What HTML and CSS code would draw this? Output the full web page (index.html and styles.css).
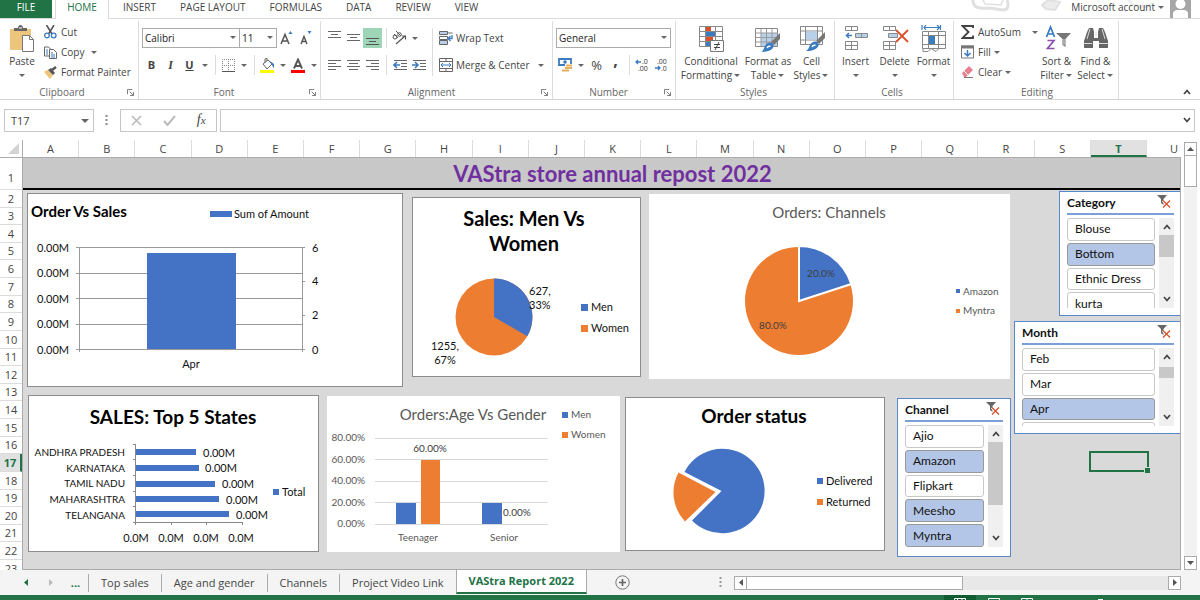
FILE: index.html
```html
<!DOCTYPE html>
<html lang="en">
<head>
<meta charset="utf-8">
<title>VAStra Report 2022</title>
<link rel="stylesheet" href="styles.css">
</head>
<body>
<svg class="defs" aria-hidden="true">
  <defs>
    <symbol id="launch" viewBox="0 0 8 8"><path d="M.5 6V.5H6M3 3l4 4M7.500 3.500v4h-4" fill="none" stroke="#666"/></symbol>
    <symbol id="clear-filter" viewBox="0 0 14 14"><path d="M0 0h10L6.500 4v6L4 8V4z" fill="#666"/><path d="M6 5.500l7 7M13 5.500l-7 7" stroke="#fff" stroke-width="3"/><path d="M6 5.500l7 7M13 5.500l-7 7" stroke="#d9512c" stroke-width="1.300"/></symbol>
    <symbol id="up" viewBox="0 0 8 6"><path d="M1 5l3-3.500L7 5" fill="none" stroke="#444" stroke-width="1.700"/></symbol>
    <symbol id="down" viewBox="0 0 8 6"><path d="M1 1l3 3.500L7 1" fill="none" stroke="#444" stroke-width="1.700"/></symbol>
    <symbol id="brush" viewBox="0 0 20 20"><path d="M19 0v6l-6 6-3-3z" fill="#777"/><path d="M9 9.500c2 0 4 2 3.500 4C11.500 17 7 19 0 19c3-2 3-4 4-6s3-3.500 5-3.500z" fill="#3b7bbf"/><path d="M6 15c1-2 3-2 3.500-1.500" stroke="#fff" stroke-width="1.500" fill="none"/></symbol>
  </defs>
</svg>

<div class="app">
  <header class="tabs">
    <button class="tab file">FILE</button>
    <button class="tab home">HOME</button>
    <button class="tab">INSERT</button>
    <button class="tab">PAGE LAYOUT</button>
    <button class="tab">FORMULAS</button>
    <button class="tab">DATA</button>
    <button class="tab">REVIEW</button>
    <button class="tab">VIEW</button>
    <svg class="art" width="220" height="14" viewBox="960 0 220 14" fill="none" stroke="#e0e0e0" stroke-width="3"><path d="M970 0c0 8 6 9 16 8l14 2c5 0 6-4 4-10"/><path d="M980 0l2 4 16 1 2-5" stroke-width="1.500"/><path d="M1039 5l6-5 12 2-5 8-9-1z" fill="#ececec" stroke-width="2"/><path d="M1126 0c2 8 20 8 24 3" stroke="#eee"/></svg>
    <button class="account">Microsoft account <i class="caret"></i></button>
    <svg class="avatar" width="21" height="18" viewBox="0 0 21 18"><path d="M0 0h21v18H0z" fill="#a6a6a6"/><circle cx="10.500" cy="4" r="5" fill="#fff"/><path d="M3 18v-4c0-3 2-4 5-4h5c3 0 5 1 5 4v4z" fill="#fff"/></svg>
  </header>

  <div class="ribbon">
    <section class="group clipboard">
      <div class="content">
        <button class="big paste"><svg width="26" height="28" viewBox="0 0 26 28"><path d="M1 4h21v21H1z" fill="#edc57c"/><path d="M5 6V3h4c0-4 5-4 5 0h4v3z" fill="#666"/><path d="M10 3h3" stroke="#fff"/><path d="M13.500 10.500h7l4 4v12h-11z" fill="#fff" stroke="#777"/><path d="M20.500 10.500v4h4" fill="none" stroke="#777"/></svg>Paste<i class="caret"></i></button>
        <div class="stack">
          <button><svg width="13" height="14" viewBox="0 0 13 14"><path d="M2.500 0l5.500 9M10 0L4.500 9" stroke="#555" stroke-width="1.600"/><circle cx="3" cy="10.500" r="2.300" fill="none" stroke="#3b7bbf" stroke-width="1.300"/><circle cx="9.700" cy="10.500" r="2.300" fill="none" stroke="#3b7bbf" stroke-width="1.300"/></svg>Cut</button>
          <button><svg width="13" height="13" viewBox="0 0 13 13"><path d="M.5 1h4l2 2v7h-6z" fill="#fff" stroke="#666"/><path d="M5.500 3.500h4l3 3v6h-7z" fill="#fff" stroke="#666"/><path d="M7 7h2M7 9h4M7 11h4M2 4h2M2 6h2M2 8h2" stroke="#3b7bbf"/></svg>Copy<i class="caret"></i></button>
          <button><svg width="13" height="13" viewBox="0 0 13 13"><path d="M1 5l3-1 5 5-3 4L0 6z" fill="#edc57c"/><path d="M4 4l3-2 4 5-2 2z" fill="#555"/><path d="M8 4l4-3" stroke="#555" stroke-width="2.500"/></svg>Format Painter</button>
        </div>
      </div>
      <div class="label">Clipboard<svg width="7" height="7"><use href="#launch"/></svg></div>
    </section>

    <section class="group font">
      <div class="content">
        <div class="rows">
        <div class="row">
          <label class="combo face"><select aria-label="Font"><option>Calibri</option></select></label><label class="combo size"><select aria-label="Font size"><option>11</option></select></label>
          <button class="tool" aria-label="Increase font size"><svg width="14" height="16" viewBox="0 0 14 16"><path d="M1 14L5 4.500 9 14M2.500 11h5" fill="none" stroke="#555" stroke-width="1.500"/><path d="M8.500 4l2-3 2 3z" fill="#3b7bbf"/></svg></button>
          <button class="tool" aria-label="Decrease font size"><svg width="14" height="16" viewBox="0 0 14 16"><path d="M2 14l3-7.500L8 14M3 11.500h4" fill="none" stroke="#555" stroke-width="1.400"/><path d="M8.500 1h4l-2 3z" fill="#3b7bbf"/></svg></button>
        </div>
        <div class="row">
          <button class="tool bold">B</button><button class="tool italic">I</button><button class="tool under">U</button><i class="caret"></i><i class="sep"></i>
          <button class="tool" aria-label="Borders"><svg width="13" height="13" viewBox="0 0 13 13"><path d="M.5 0v13M6.500 0v13M12.500 0v13M0 .5h13M0 6.500h13" stroke="#888" stroke-dasharray="1 1"/><path d="M0 12.500h13" stroke="#555"/></svg></button><i class="caret"></i><i class="sep"></i>
          <button class="tool" aria-label="Fill colour"><svg width="15" height="15" viewBox="0 0 15 15"><path d="M3 6l5-4 4 4-5 5z" fill="#fff" stroke="#666"/><path d="M5 5V1l2-1v3" fill="none" stroke="#666"/><path d="M10 3l4 3v4c-2-1-1-3-3-4z" fill="#3b7bbf"/><path d="M0 12h14v3H0z" fill="#ff0"/></svg></button><i class="caret"></i>
          <button class="tool" aria-label="Font colour"><svg width="15" height="15" viewBox="0 0 15 15"><path d="M3 10.500L7 1.500l4 9M4.500 8h5" fill="none" stroke="#555" stroke-width="1.900"/><path d="M0 12h14v3H0z" fill="#f00"/></svg></button><i class="caret"></i>
        </div>
        </div>
      </div>
      <div class="label">Font<svg width="7" height="7"><use href="#launch"/></svg></div>
    </section>

    <section class="group alignment">
      <div class="content">
        <div class="rows">
          <div class="row">
            <button class="tool" aria-label="Top align"><svg width="13" height="14"><path d="M0 3.500h13M3 6.500h7M0 9.500h13" transform="translate(0 -3)" stroke="#666"/></svg></button>
            <button class="tool" aria-label="Middle align"><svg width="13" height="14"><path d="M0 3.500h13M3 6.500h7M0 9.500h13" stroke="#666"/></svg></button>
            <button class="tool on" aria-label="Bottom align"><svg width="13" height="14"><path d="M0 3.500h13M3 6.500h7M0 9.500h13" transform="translate(0 4)" stroke="#555"/></svg></button>
            <i class="sep"></i>
            <button class="tool" aria-label="Orientation"><svg width="15" height="14" viewBox="0 0 15 14" fill="none" stroke="#555"><circle cx="3" cy="6" r="2"/><path d="M2 3l4 4M4 0l5 5"/><circle cx="7.500" cy="3.500" r="1.800"/><path d="M4 13l9-8M10 5h3.500v3.500" stroke-width="1.200"/></svg></button><i class="caret"></i>
          </div>
          <div class="row">
            <button class="tool" aria-label="Align left"><svg width="13" height="12"><path d="M0 1.500h13M0 4.500h8M0 7.500h13M0 10.500h8" stroke="#666"/></svg></button>
            <button class="tool" aria-label="Centre"><svg width="13" height="12"><path d="M0 1.500h13M2 4.500h9M0 7.500h13M2 10.500h9" stroke="#666"/></svg></button>
            <button class="tool" aria-label="Align right"><svg width="13" height="12"><path d="M0 1.500h13M5 4.500h8M0 7.500h13M5 10.500h8" stroke="#666"/></svg></button>
            <i class="sep"></i>
            <button class="tool" aria-label="Decrease indent"><svg width="14" height="12"><path d="M1 1.500h13M8 4.500h6M8 7.500h6M1 10.500h13" stroke="#666"/><path d="M1 6h6M4 3L1 6l3 3" fill="none" stroke="#3b7bbf" stroke-width="1.600"/></svg></button>
            <button class="tool" aria-label="Increase indent"><svg width="14" height="12"><path d="M1 1.500h13M8 4.500h6M8 7.500h6M1 10.500h13" stroke="#666"/><path d="M0 6h6M3 3l3 3-3 3" fill="none" stroke="#3b7bbf" stroke-width="1.600"/></svg></button>
          </div>
        </div>
        <i class="sep tall"></i>
        <div class="rows">
          <div class="row"><button class="wide"><svg width="14" height="14" viewBox="0 0 14 14"><path d="M.5.5h8v3h-8zM.5 9.500h8v4h-8z" fill="#b9d0ea" stroke="#666"/><path d="M.5 5.500h8v3h-8z" fill="#fff" stroke="#666"/><path d="M9 2h4.500" stroke="#666"/><path d="M13 4v3.500H9.500M11.500 5L9 7.500l2.500 2.500" fill="none" stroke="#3b7bbf" stroke-width="1.300"/></svg>Wrap Text</button></div>
          <div class="row"><button class="wide"><svg width="14" height="14" viewBox="0 0 14 14"><path d="M.5.5h13v13H.5zM.5 3.500h13M.5 10.500h13M7 .5v3M7 10.500v3" fill="#fff" stroke="#666"/><path d="M2 7h10M4 5L2 7l2 2M10 5l2 2-2 2" fill="none" stroke="#3b7bbf"/></svg>Merge &amp; Center<i class="caret"></i></button></div>
        </div>
      </div>
      <div class="label">Alignment<svg width="7" height="7"><use href="#launch"/></svg></div>
    </section>

    <section class="group number">
      <div class="content">
        <div class="rows">
        <div class="row"><label class="combo format"><select aria-label="Number format"><option>General</option></select></label></div>
        <div class="row">
          <button class="tool" aria-label="Accounting format"><svg width="15" height="14" viewBox="0 0 15 14"><path d="M1 1h12v6H1z" fill="#fff" stroke="#3b7bbf" stroke-width="1.800"/><circle cx="7" cy="4" r="1.800" fill="#3b7bbf"/><path d="M7 7.500h7M7 10h7M5 12.500h7" stroke="#fff" stroke-width="3"/><path d="M8 7.500h6M7 10h7M4 12.500h7" stroke="#e8b05a" stroke-width="1.800"/></svg></button><i class="caret"></i>
          <button class="tool pct">%</button><button class="tool comma">,</button><i class="sep"></i>
          <button class="tool dec" aria-label="Increase decimal"><svg width="15" height="14" viewBox="0 0 15 14"><path d="M1 4h5M3 2L1 4l2 2" fill="none" stroke="#3b7bbf" stroke-width="1.300"/><text x="7" y="6">.0</text><text x="3" y="13">.00</text></svg></button>
          <button class="tool dec" aria-label="Decrease decimal"><svg width="15" height="14" viewBox="0 0 15 14"><path d="M1 10h5M4 8l2 2-2 2" fill="none" stroke="#3b7bbf" stroke-width="1.300"/><text x="3" y="6">.00</text><text x="7" y="13">.0</text></svg></button>
        </div>
        </div>
      </div>
      <div class="label">Number<svg width="7" height="7"><use href="#launch"/></svg></div>
    </section>

    <section class="group styles">
      <div class="content">
        <button class="big xl"><svg width="28" height="28" viewBox="0 0 28 28"><path d="M2.500 1.500h23v20h-23zM2.500 6.500h23M2.500 11.500h23M2.500 16.500h23M8.500 1.500v20M18.500 1.500v20" fill="#fff" stroke="#888"/><path d="M9 2h5v4H9zM9 12h7v4H9z" fill="#d9512c"/><path d="M9 7h9v4H9zM9 17h4v4H9z" fill="#3b7bbf"/><path d="M13.500 15.500h13v11h-13z" fill="#fff" stroke="#777"/><path d="M17 19.500h6M17 22.500h6M22 17l-4 8" stroke="#444"/></svg>Conditional<span>Formatting<i class="caret"></i></span></button>
        <button class="big md"><svg width="28" height="28" viewBox="0 0 28 28"><path d="M1.500 3.500h22v18h-22z" fill="#fff" stroke="#888"/><path d="M7 8h16v13H7z" fill="#b9d0ea"/><path d="M1.500 8h22M1.500 12.500h22M1.500 17h22M7 3.500v18M12.500 3.500v18M18 3.500v18" stroke="#999"/><use href="#brush" x="7" y="8" width="20" height="20"/></svg>Format as<span>Table<i class="caret"></i></span></button>
        <button class="big sm"><svg width="28" height="28" viewBox="0 0 28 28"><path d="M2.500 1.500h22v18h-22zM2.500 6h22M2.500 15h22M7.500 1.500v18M19.500 1.500v18" fill="#fff" stroke="#888"/><path d="M8 6.500h11v8H8z" fill="#b9d0ea"/><use href="#brush" x="8" y="7" width="20" height="20"/></svg>Cell<span>Styles<i class="caret"></i></span></button>
      </div>
      <div class="label">Styles</div>
    </section>

    <section class="group cells">
      <div class="content">
        <button class="big sm"><svg width="28" height="28" viewBox="0 0 28 28"><path d="M3.500 1.500h12v4h-12zM9.500 1.500v4M3.500 16.500h12v8h-12zM9.500 16.500v8M3.500 20.500h12" fill="#fff" stroke="#888"/><path d="M13.500 8.500h12v4h-12zM19.500 8.500v4" fill="#b9d0ea" stroke="#888"/><path d="M4 10.500h6M7 8l-2.500 2.500L7 13" fill="none" stroke="#3b7bbf" stroke-width="1.500"/></svg>Insert<i class="caret"></i></button>
        <button class="big sm"><svg width="28" height="28" viewBox="0 0 28 28"><path d="M2.500 1.500h12v4h-12zM8.500 1.500v4M2.500 16.500h12v8h-12zM8.500 16.500v8M2.500 20.500h12" fill="#fff" stroke="#888"/><path d="M7.500 8.500h9v4h-9z" fill="#b9d0ea" stroke="#888"/><path d="M15 5l12 12M27 5L15 17" stroke="#d9512c" stroke-width="1.800"/></svg>Delete<i class="caret"></i></button>
        <button class="big sm"><svg width="28" height="28" viewBox="0 0 28 28"><path d="M2 0v5M20.500 0v5M4 2.500h15M6 0L4 2.500 6 5M17 0l2.500 2.500L17 5" fill="none" stroke="#3b7bbf" stroke-width="1.200"/><path d="M2.500 6.500h23v17h-23zM2.500 10.500h23M2.500 19.500h23M8.500 6.500v17M18.500 6.500v17M3 23.500v3h5l3-3 5 3 3-3" fill="#fff" stroke="#888"/><path d="M9 11h6v8H9z" fill="#3b7bbf"/></svg>Format<i class="caret"></i></button>
      </div>
      <div class="label">Cells</div>
    </section>

    <section class="group editing">
      <div class="content">
        <div class="stack">
          <button><svg width="13" height="14" viewBox="0 0 13 14"><path d="M12 3V1H1.500l6 6-6 6H12v-2.500" fill="none" stroke="#444" stroke-width="1.900"/></svg>AutoSum<i class="caret far"></i></button>
          <button><svg width="13" height="14" viewBox="0 0 13 14"><path d="M.5 1h12v12H.5z" fill="#fff" stroke="#777"/><path d="M0 .5h13v3H0z" fill="#777"/><path d="M6.500 5v6M3.500 8l3 3 3-3" fill="none" stroke="#3b7bbf" stroke-width="1.500"/></svg>Fill<i class="caret near"></i></button>
          <button><svg width="13" height="13" viewBox="0 0 13 13"><path d="M1 7l7-7 4 4-7 7H3z" fill="#e8818f"/><path d="M3 5l4 4" stroke="#fff"/><path d="M3 11.500h9" stroke="#777"/></svg>Clear<i class="caret near"></i></button>
        </div>
        <button class="big sm"><svg width="28" height="28" viewBox="0 0 28 28"><path d="M3.500 12L7.500 2l4 10M5 9h5" fill="none" stroke="#3b7bbf" stroke-width="1.700"/><path d="M4.500 15.500h6.500l-6.500 8h7" fill="none" stroke="#8b4fb0" stroke-width="1.700"/><path d="M13 8h15l-5.500 6v8l-3-2v-6z" fill="#777"/><path d="M21 14v6" stroke="#ddd"/></svg>Sort &amp;<span>Filter<i class="caret"></i></span></button>
        <button class="big sm"><svg width="28" height="28" viewBox="0 0 28 28"><path d="M5 7l2-4h4l1 4v6h4V7l1-4h4l2 4 3 9v7h-9v-7h-6v7H2v-7z" fill="#666"/><path d="M2 18.500h8M17 18.500h9M8 4l-3 10M20 4l3 10M14 7v5" stroke="#ddd"/></svg>Find &amp;<span>Select<i class="caret"></i></span></button>
      </div>
      <div class="label">Editing</div>
    </section>
    <button class="collapse" aria-label="Collapse the ribbon"><svg width="8" height="6"><use href="#up"/></svg></button>
  </div>

  <div class="formula">
    <label class="namebox combo"><input value="T17" aria-label="Name box"></label>
    <svg class="grip" width="3" height="11"><path d="M1.500 0v11" stroke="#888" stroke-width="2" stroke-dasharray="2 2"/></svg>
    <div class="fx">
      <button aria-label="Cancel"><svg width="11" height="11" viewBox="0 0 11 11"><path d="M1 1l9 9M10 1l-9 9" stroke="#bbb" stroke-width="1.600"/></svg></button>
      <button aria-label="Enter"><svg width="13" height="11" viewBox="0 0 13 11"><path d="M1 6l3.500 4L12 1" fill="none" stroke="#bbb" stroke-width="2"/></svg></button>
      <button class="fn">f<small>x</small></button>
    </div>
    <div class="entry"><input aria-label="Formula"><svg width="8" height="6"><use href="#down"/></svg></div>
  </div>

  <main class="sheet">
    <div class="corner"><svg width="11" height="11"><path d="M11 0v11H0z" fill="#d4d4d4"/></svg></div>
    <div class="cols"><span>A</span><span>B</span><span>C</span><span>D</span><span>E</span><span>F</span><span>G</span><span>H</span><span>I</span><span>J</span><span>K</span><span>L</span><span>M</span><span>N</span><span>O</span><span>P</span><span>Q</span><span>R</span><span>S</span><span class="sel">T</span><span class="cut">U</span></div>
    <div class="rownums"><span>1</span><span>2</span><span>3</span><span>4</span><span>5</span><span>6</span><span>7</span><span>8</span><span>9</span><span>10</span><span>11</span><span>12</span><span>13</span><span>14</span><span>15</span><span>16</span><span class="sel">17</span><span>18</span><span>19</span><span>20</span><span>21</span><span>22</span><span>23</span></div>

    <div class="canvas">
      <h1>VAStra store annual repost 2022</h1>

      <figure class="chart framed c-orders"><svg viewBox="27 193 376 194">
        <text class="h15" x="31" y="217">Order Vs Sales</text>
        <path d="M210 211h22v6h-22z" fill="#4472c4"/><text x="234" y="218">Sum of Amount</text>
        <path d="M76 247.500h229M76 273.500h226M76 298.500h226M76 324.500h226M76 349.500h229M79.500 247v105M302.500 247v105M302 281.500h3M302 315.500h3" stroke="#999"/>
        <path d="M147 253h89v96h-89z" fill="#4472c4"/>
        <g text-anchor="end"><text x="69" y="252">0.00M</text><text x="69" y="277">0.00M</text><text x="69" y="303">0.00M</text><text x="69" y="328">0.00M</text><text x="69" y="354">0.00M</text></g>
        <text x="312" y="252">6</text><text x="312" y="285">4</text><text x="312" y="319">2</text><text x="312" y="354">0</text>
        <text class="mid" x="191" y="368">Apr</text>
      </svg></figure>

      <figure class="chart framed c-sales"><svg viewBox="412 197 229 180">
        <text class="h20 mid" x="524" y="226">Sales: Men Vs</text><text class="h20 mid" x="524" y="251">Women</text>
        <circle cx="494" cy="317" r="38.500" fill="#ed7d31"/><path d="M494 317V278.500A38.500 38.500 0 0 1 527.300 336.200z" fill="#4472c4"/>
        <text x="529" y="295">627,</text><text x="529" y="309">33%</text>
        <text class="mid" x="445" y="350">1255,</text><text class="mid" x="445" y="364">67%</text>
        <path d="M581 304h7v7h-7z" fill="#4472c4"/><text x="591" y="311">Men</text>
        <path d="M581 325h7v7h-7z" fill="#ed7d31"/><text x="591" y="332">Women</text>
      </svg></figure>

      <figure class="chart c-channels"><svg class="soft" viewBox="649 194 361 185">
        <text class="t15 mid" x="829" y="218">Orders: Channels</text>
        <circle cx="799" cy="301" r="54" fill="#ed7d31"/><path d="M799 301V246A55 55 0 0 1 851.300 284z" fill="#4472c4" stroke="#fff" stroke-width="2"/>
        <g class="dark"><text class="s10 mid" x="821" y="277">20.0%</text><text class="s10 mid" x="773" y="329">80.0%</text></g>
        <path d="M956 289h4v4h-4z" fill="#4472c4"/><text class="s10" x="963" y="295">Amazon</text>
        <path d="M956 309h4v4h-4z" fill="#ed7d31"/><text class="s10" x="963" y="314">Myntra</text>
      </svg></figure>

      <figure class="chart framed c-states"><svg viewBox="28 395 291 157">
        <text class="h19 mid" x="173" y="424">SALES: Top 5 States</text>
        <path d="M136 449h60v6h-60zM136 465h63v6h-63zM136 481h79v6h-79zM136 496h83v6h-83zM136 511h93v6h-93z" fill="#4472c4"/>
        <path d="M135.500 444v81M133 444.500h3M133 459.500h3M133 475.500h3M133 491.500h3M133 506.500h3M133 522.500h109M171.500 522v3M206.500 522v3M242.500 522v3" stroke="#888" fill="none"/>
        <g text-anchor="end"><text class="s10" x="125" y="456">ANDHRA PRADESH</text><text class="s10" x="125" y="472">KARNATAKA</text><text class="s10" x="125" y="487">TAMIL NADU</text><text class="s10" x="125" y="503">MAHARASHTRA</text><text class="s10" x="125" y="519">TELANGANA</text></g>
        <text x="203" y="457">0.00M</text><text x="205" y="472">0.00M</text><text x="222" y="488">0.00M</text><text x="226" y="504">0.00M</text><text x="236" y="519">0.00M</text>
        <g text-anchor="middle"><text x="136" y="542">0.0M</text><text x="171" y="542">0.0M</text><text x="206" y="542">0.0M</text><text x="241" y="542">0.0M</text></g>
        <path d="M273 489h6v6h-6z" fill="#4472c4"/><text x="282" y="496">Total</text>
      </svg></figure>

      <figure class="chart c-gender"><svg class="soft" viewBox="327 396 293 156">
        <text class="t15 mid" x="473" y="420">Orders:Age Vs Gender</text>
        <path d="M375 438.500h173M375 459.500h173M375 481.500h173M375 502.500h173M375 524.500h173" stroke="#d9d9d9"/>
        <path d="M396 503h20v21h-20zM482 503h20v21h-20z" fill="#4472c4"/><path d="M421 460h19v64h-19z" fill="#ed7d31"/>
        <g text-anchor="end"><text class="s10" x="365" y="441">80.00%</text><text class="s10" x="365" y="463">60.00%</text><text class="s10" x="365" y="484">40.00%</text><text class="s10" x="365" y="506">20.00%</text><text class="s10" x="365" y="527">0.00%</text></g>
        <g class="dark"><text class="s10 mid" x="430" y="452">60.00%</text><text class="s10" x="503" y="516">0.00%</text></g>
        <text class="s10 mid" x="418" y="541">Teenager</text><text class="s10 mid" x="504" y="541">Senior</text>
        <path d="M562 412h6v6h-6z" fill="#4472c4"/><text class="s10" x="571" y="418">Men</text>
        <path d="M562 432h6v6h-6z" fill="#ed7d31"/><text class="s10" x="571" y="438">Women</text>
      </svg></figure>

      <figure class="chart framed c-status"><svg viewBox="625 397 260 154">
        <text class="h19 mid" x="754" y="423">Order status</text>
        <path d="M721.500 491L684.500 472A42.300 42.300 0 1 1 692 520.500z" fill="#4472c4"/><path d="M715.500 492L678.500 472.500A42.300 42.300 0 0 0 685 521.500z" fill="#ed7d31"/>
        <path d="M817 478h6v6h-6z" fill="#4472c4"/><text x="826" y="485">Delivered</text>
        <path d="M817 499h6v6h-6z" fill="#ed7d31"/><text x="826" y="506">Returned</text>
      </svg></figure>

      <section class="slicer s-category">
        <header><h2>Category</h2><button aria-label="Clear filter"><svg width="14" height="14"><use href="#clear-filter"/></svg></button></header>
        <div class="body"><div class="clip"><div class="items"><button>Blouse</button><button class="on">Bottom</button><button>Ethnic Dress</button><button>kurta</button></div></div>
        <div class="bar"><svg width="8" height="6"><use href="#up"/></svg><i></i><svg width="8" height="6"><use href="#down"/></svg></div></div>
      </section>
      <section class="slicer s-month">
        <header><h2>Month</h2><button aria-label="Clear filter"><svg width="14" height="14"><use href="#clear-filter"/></svg></button></header>
        <div class="body"><div class="clip"><div class="items"><button>Feb</button><button>Mar</button><button class="on">Apr</button><button aria-label="Next month"></button></div></div>
        <div class="bar"><svg width="8" height="6"><use href="#up"/></svg><i></i><svg width="8" height="6"><use href="#down"/></svg></div></div>
      </section>
      <section class="slicer s-channel">
        <header><h2>Channel</h2><button aria-label="Clear filter"><svg width="14" height="14"><use href="#clear-filter"/></svg></button></header>
        <div class="body"><div class="clip"><div class="items five"><button>Ajio</button><button class="on">Amazon</button><button>Flipkart</button><button class="on">Meesho</button><button class="on">Myntra</button></div></div>
        <div class="bar"><svg width="8" height="6"><use href="#up"/></svg><i></i><svg width="8" height="6"><use href="#down"/></svg></div></div>
      </section>
      <div class="cursor"></div>
    </div>

    <div class="vscroll"><button aria-label="Scroll up"><svg width="7" height="4"><path d="M0 4l3.500-4L7 4z" fill="#555"/></svg></button><i></i><button class="end" aria-label="Scroll down"><svg width="7" height="4"><path d="M0 0h7L3.500 4z" fill="#555"/></svg></button></div>
  </main>

  <footer class="sheets">
    <button class="nav" aria-label="Previous sheet"><svg width="4" height="7"><path d="M4 0v7L0 3.500z" fill="#217346"/></svg></button>
    <button class="nav" aria-label="Next sheet"><svg width="4" height="7"><path d="M0 0v7l4-3.500z" fill="#bbb"/></svg></button>
    <button class="nav more">...</button>
    <button class="sheet-tab">Top sales</button><button class="sheet-tab">Age and gender</button><button class="sheet-tab">Channels</button><button class="sheet-tab">Project Video Link</button><button class="sheet-tab active">VAStra Report 2022</button>
    <button class="add" aria-label="New sheet"><svg width="15" height="15" viewBox="0 0 15 15"><circle cx="7.500" cy="7.500" r="6.700" fill="none" stroke="#777"/><path d="M7.500 4v7M4 7.500h7" stroke="#666" stroke-width="1.700"/></svg></button>
    <svg class="grip" width="3" height="11"><path d="M1.500 0v11" stroke="#999" stroke-width="2" stroke-dasharray="2 2"/></svg>
    <div class="hscroll"><button aria-label="Scroll left"><svg width="4" height="7"><path d="M4 0v7L0 3.500z" fill="#555"/></svg></button><i></i><button class="end" aria-label="Scroll right"><svg width="4" height="7"><path d="M0 0v7l4-3.500z" fill="#555"/></svg></button></div>
  </footer>
  <div class="status"><svg width="240" height="5" viewBox="944 595 240 5"><path d="M944 595h32v5h-32z" fill="#0f5c30"/><path d="M954.500 600v-1.500h11v1.500M957.500 598v2M962 598v2M988.500 600v-1.500h11v1.500M1021.500 600v-1.500h11v1.500M1027 598v2M1098 599.500h5" fill="none" stroke="#fff"/></svg></div>
</div>
</body>
</html>
```

FILE: styles.css
```css
* { box-sizing: border-box; }
body { margin: 0; font: 11px/14px "Open Sans", "Noto Sans", sans-serif; color: #444; background: #fff; }
button, input, select { font: inherit; color: inherit; background: none; border: 0; border-radius: 0; padding: 0; margin: 0; outline: 0; }
button { display: flex; align-items: center; justify-content: center; white-space: nowrap; }
svg { flex: none; display: block; }
h1, h2, figure { margin: 0; }
.defs { position: absolute; width: 0; height: 0; }
.app { display: flex; flex-direction: column; height: 100vh; overflow: hidden; }

.caret { flex: none; width: 12px; display: flex; justify-content: center; }
.caret::after, .combo::after { content: ""; border: 3px solid transparent; border-top-color: #666; border-bottom: 0; }
.sep { flex: none; width: 8px; height: 20px; background: linear-gradient(#dcdcdc, #dcdcdc) center / 1px 100% no-repeat; }
.sep.tall { height: 48px; margin-top: 7px; }

/* ribbon tabs */
.tabs { display: flex; height: 19px; flex: none; border-bottom: 1px solid #d9d9d9; font-size: 10px; }
.tab { padding: 0 12px 4px; height: 18px; }
.tab.file { width: 52px; background: #217346; color: #fff; }
.tab.home { width: 54px; margin: 0 2px 0 3px; height: 19px; padding-bottom: 5px; color: #217346; background: #fff; border: solid #d9d9d9; border-width: 0 1px; }
.art { margin-left: auto; margin-right: -112px; }
.account { padding-bottom: 4px; height: 18px; position: relative; }
.avatar { margin: 0 9px 0 3px; }

/* ribbon */
.ribbon { display: flex; height: 81px; flex: none; border-bottom: 1px solid #d4d4d4; padding-top: 2px; font-size: 10px; }
.group { display: flex; flex-direction: column; border-right: 1px solid #dcdcdc; flex: none; }
.content { display: flex; flex: 1; }
.label { display: flex; justify-content: center; position: relative; height: 14px; line-height: 14px; color: #666; padding-right: 14px; }
.label svg { position: absolute; right: 4px; top: 4px; }
.rows { display: flex; flex-direction: column; gap: 7px; padding-top: 7px; flex: none; }
.row { display: flex; align-items: center; height: 20px; }
.tool { width: 19px; height: 20px; flex: none; }
.tool.on { background: #9fd5b7; }
.bold { font-weight: 700; font-size: 11px; }
.italic { font: italic 700 12px "Liberation Serif", serif; }
.under { font-weight: 700; font-size: 11px; text-decoration: underline; }
.pct { font-size: 13px; }
.comma { font: 700 16px/8px "Open Sans", sans-serif; padding-bottom: 10px; }
.dec text { font: 7px "Open Sans", sans-serif; fill: #333; }
.stack { display: flex; flex-direction: column; padding-top: 1px; flex: none; }
.stack button { height: 20px; gap: 4px; justify-content: flex-start; }
.stack .far { margin-left: 4px; }
.stack .near { width: 8px; margin-left: -2px; }
.big { flex-direction: column; justify-content: flex-start; padding-top: 4px; height: 64px; flex: none; }
.big > svg { margin-bottom: 1px; }
.big > .caret { height: 14px; align-items: center; }
.big span { display: flex; align-items: center; }
.big span .caret { width: 8px; margin-left: 1px; }
.wide { gap: 3px; padding-left: 3px; }
.wide .caret { margin-left: 2px; }
.sm { width: 39px; }
.md { width: 48px; }
.xl { width: 66px; }

.clipboard { width: 139px; }
.paste { width: 44px; }
.font { width: 182px; padding-left: 3px; }
.alignment { width: 232px; padding-left: 4px; }
.number { width: 123px; padding-left: 3px; }
.styles { width: 159px; padding-left: 2px; }
.styles .label, .cells .label, .editing .label { padding-right: 5px; }
.cells { width: 119px; padding-left: 1px; }
.editing { width: 165px; padding-left: 7px; }
.editing .stack { width: 76px; }
.collapse { margin: auto 9px 4px auto; }

.combo { position: relative; display: flex; }
.combo::after { position: absolute; right: 4px; top: 8px; pointer-events: none; }
.combo select { appearance: none; width: 100%; height: 20px; border: 1px solid #ababab; padding: 0 2px; color: #222; background: #fff; }
.face { width: 98px; }
.size { width: 38px; margin-left: -1px; }
.format { width: 115px; }

/* formula bar */
.formula { display: flex; align-items: center; height: 40px; flex: none; padding: 0 5px 0 4px; }
.namebox { width: 90px; }
.namebox input { width: 100%; height: 23px; border: 1px solid #c6c6c6; padding: 0 6px; }
.namebox.combo::after { top: 10px; right: 5px; border-width: 4px 4px 0; }
.formula .grip { margin: 0 12px 0 11px; }
.fx { display: flex; width: 97px; height: 23px; border: 1px solid #c6c6c6; justify-content: space-around; margin-right: 3px; }
.fn { font: italic 14px "Liberation Serif", serif; }
.fn small { font-size: 11px; }
.entry { display: flex; flex: 1; align-items: center; height: 23px; border: 1px solid #c6c6c6; padding-right: 3px; }
.entry input { flex: 1; min-width: 0; }

/* worksheet */
.sheet { display: grid; flex: 1; min-height: 0; grid-template: 18px minmax(0, 1fr) / 23px minmax(0, 1fr) 19px; }
.corner { display: flex; justify-content: flex-end; align-items: flex-end; padding: 0 3px 3px 0; border: solid #ababab; border-width: 0 1px 1px 0; }
.cols { display: grid; grid-template-columns: repeat(20, 1fr) 34px; line-height: 18px; text-align: center; border-bottom: 1px solid #ababab; overflow: hidden; }
.cols span { border-right: 1px solid #dcdcdc; height: 17px; }
.cols .sel { background: #e1e1e1; color: #217346; font-weight: 700; border-bottom: 2px solid #217346; }
.cols .cut { border: 0; padding-left: 20px; }
.rownums { display: grid; grid-template-rows: 32px repeat(21, minmax(0, 1fr)) 10px; text-align: center; border-right: 1px solid #ababab; overflow: hidden; }
.rownums span { display: flex; align-items: flex-end; justify-content: center; border-bottom: 1px solid #dcdcdc; line-height: 17px; min-height: 0; }
.rownums span:first-child { line-height: 22px; }
.rownums span:last-child { align-items: flex-start; border: 0; }
.rownums .sel { background: #e1e1e1; color: #217346; font-weight: 700; border-right: 2px solid #217346; }
.canvas { position: relative; overflow: hidden; background: #d9d9d9; border: solid #ababab; border-width: 0 1px 1px 0; font-family: Lato, "Open Sans", sans-serif; }
h1 { height: 32px; background: #c8c8c8; border-bottom: 2px solid #000; color: #7030a0; font: 700 22px/32px Lato, sans-serif; text-align: center; padding-left: 22px; }

.chart { position: absolute; background: #fff; }
.framed { outline: 1px solid #8c8c8c; outline-offset: -1px; }
.chart svg { width: 100%; height: 100%; }
.chart text { font: 11px Lato, sans-serif; fill: #111; }
.chart .soft text { fill: #595959; }
.chart .dark text { fill: #404040; }
.chart .mid { text-anchor: middle; }
.chart text.s10 { font-size: 10px; }
.chart text.t15 { font-size: 15px; }
.chart text.h15 { font-size: 15px; font-weight: 700; fill: #000; }
.chart text.h19 { font-size: 19px; font-weight: 700; fill: #000; }
.chart text.h20 { font-size: 20px; font-weight: 700; fill: #000; }
.c-orders { left: 4px; top: 35px; width: 376px; height: 194px; }
.c-sales { left: 389px; top: 39px; width: 229px; height: 180px; }
.c-channels { left: 626px; top: 36px; width: 361px; height: 185px; }
.c-states { left: 5px; top: 237px; width: 291px; height: 157px; }
.c-gender { left: 304px; top: 238px; width: 293px; height: 156px; }
.c-status { left: 602px; top: 239px; width: 260px; height: 154px; }

.slicer { position: absolute; background: #fff; border: 1px solid #5b87cf; padding: 0 7px; color: #111; }
.slicer header { display: flex; justify-content: space-between; height: 23px; border-bottom: 2px solid #7d9fd9; padding: 3px 3px 0 0; align-items: flex-start; }
.slicer h2 { font: 700 12px/16px Lato, sans-serif; }
.body { display: flex; gap: 4px; padding-top: 3px; }
.clip { flex: 1; overflow: hidden; }
.items { display: grid; grid-auto-rows: 1fr; gap: 2px; height: 97px; }
.items.five { height: 122px; }
.items button { justify-content: flex-start; padding-left: 7px; font-size: 12px; border: 1px solid #c8c8c8; border-radius: 3px; }
.items .on { background: #b4c6e7; border-color: #999; }
.bar { width: 15px; background: #f0f0f0; display: flex; flex-direction: column; align-items: center; padding: 6px 0; }
.bar i { width: 100%; background: #c8c8c8; margin: 5px 0 auto; }
.s-category { left: 1036px; top: 33px; width: 123px; }
.s-category .clip { height: 90px; }
.s-category .body, .s-month .body { padding-bottom: 7px; }
.s-category .bar i { height: 22px; }
.s-month { left: 991px; top: 163px; width: 168px; }
.s-month .clip { height: 78px; }
.s-month .bar i { height: 11px; margin-top: 7px; }
.s-channel { left: 874px; top: 240px; width: 114px; height: 159px; }
.s-channel .clip { height: 122px; }
.s-channel .bar i { height: 63px; }
.cursor { position: absolute; left: 1066px; top: 293px; width: 60px; height: 21px; border: 2px solid #217346; }
.cursor::after { content: ""; position: absolute; right: -3px; bottom: -3px; width: 5px; height: 5px; background: #217346; outline: 1px solid #d9d9d9; }

.vscroll { grid-area: 1 / 3 / 3 / 4; display: flex; flex-direction: column; background: #f2f2f2; margin: 2px 3px 0 3px; }
.vscroll button, .hscroll button { border: 1px solid #ababab; background: #fff; width: 13px; height: 14px; flex: none; }
.vscroll i { height: 31px; border: 1px solid #ababab; border-top: 0; background: #fff; }
.vscroll .end { margin-top: auto; }

/* sheet tabs */
.sheets { display: flex; align-items: center; height: 25px; flex: none; background: #f4f4f4; font-size: 11px; }
.nav { width: 25px; height: 24px; }
.nav:first-child { margin-left: 13px; }
.more { font-weight: 700; color: #217346; }
.sheet-tab { padding: 0 12px; height: 18px; border-left: 1px solid #ababab; }
.sheet-tab.active { height: 24px; align-self: flex-start; background: #fff; color: #217346; font-weight: 700; border-right: 1px solid #ababab; border-bottom: 2px solid #217346; }
.add { margin-left: 28px; }
.sheets .grip { margin-left: auto; margin-right: 12px; }
.hscroll { display: flex; width: 447px; margin-right: 19px; background: #e8e8e8; }
.hscroll i { width: 216px; border: 1px solid #ababab; border-left: 0; background: #fff; }
.hscroll .end { margin-left: auto; }
.status { height: 5px; flex: none; background: #217346; display: flex; justify-content: flex-end; padding-right: 16px; }
```
